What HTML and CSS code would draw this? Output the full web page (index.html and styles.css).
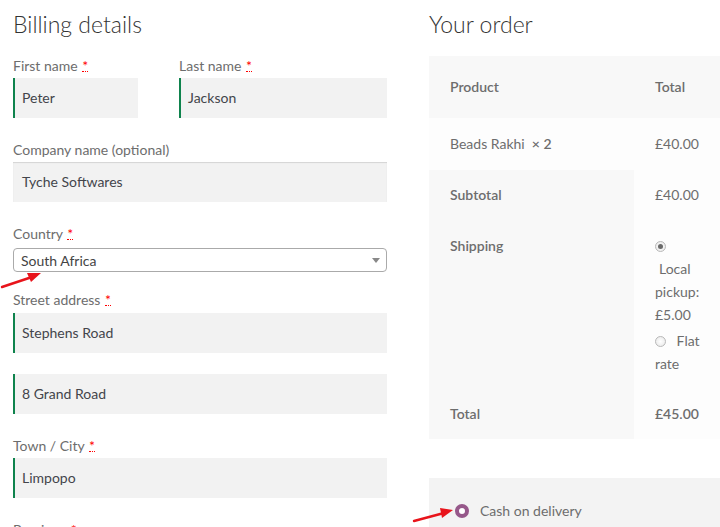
FILE: index.html
```html
<!DOCTYPE html>
<html lang="en">
<head>
    <meta charset="UTF-8">
    <meta name="viewport" content="width=device-width, initial-scale=1.0">
    <title>Checkout</title>
    <link rel="stylesheet" href="styles.css">
</head>
<body>

    <div class="checkout">

        <!-- Billing details -->
        <div class="billing">
            <h3>Billing details</h3>

            <div class="row-split">
                <div class="field field-first">
                    <label>First name <abbr>*</abbr></label>
                    <div class="input valid">Peter</div>
                </div>
                <div class="field field-last">
                    <label>Last name <abbr>*</abbr></label>
                    <div class="input valid">Jackson</div>
                </div>
            </div>

            <div class="field">
                <label>Company name (optional)</label>
                <div class="input">Tyche Softwares</div>
            </div>

            <div class="field field-select">
                <label>Country <abbr>*</abbr></label>
                <div class="select">
                    <span>South Africa</span>
                    <span class="caret"></span>
                </div>
            </div>

            <div class="field field-street">
                <label>Street address <abbr>*</abbr></label>
                <div class="input valid">Stephens Road</div>
                <div class="input valid second">8 Grand Road</div>
            </div>

            <div class="field">
                <label>Town / City <abbr>*</abbr></label>
                <div class="input valid">Limpopo</div>
            </div>

            <div class="field">
                <label>Province <abbr>*</abbr></label>
            </div>
        </div>

        <!-- Your order -->
        <div class="order">
            <h3>Your order</h3>

            <table class="order-table">
                <thead>
                    <tr>
                        <th class="col-name">Product</th>
                        <th class="col-total">Total</th>
                    </tr>
                </thead>
                <tbody>
                    <tr>
                        <td class="col-name">Beads Rakhi&nbsp; <strong class="qty">&times;&nbsp;2</strong></td>
                        <td class="col-total">&pound;40.00</td>
                    </tr>
                </tbody>
                <tfoot>
                    <tr class="subtotal">
                        <th>Subtotal</th>
                        <td>&pound;40.00</td>
                    </tr>
                    <tr class="shipping">
                        <th>Shipping</th>
                        <td>
                            <ul class="methods">
                                <li><span class="radio checked"></span> <span class="method">Local pickup: &pound;5.00</span></li>
                                <li><span class="radio"></span> <span class="method">Flat rate</span></li>
                            </ul>
                        </td>
                    </tr>
                    <tr class="grand-total">
                        <th>Total</th>
                        <td><strong>&pound;45.00</strong></td>
                    </tr>
                </tfoot>
            </table>

            <div class="payment">
                <div class="pay-method">
                    <span class="pay-radio"></span>
                    <span>Cash on delivery</span>
                </div>
            </div>
        </div>
    </div>

    <!-- annotation arrows -->
    <svg class="arrow arrow-country" width="44" height="20" viewBox="0 0 44 20">
        <line x1="2" y1="17" x2="32" y2="7" stroke="#e8141b" stroke-width="2.4" stroke-linecap="round"/>
        <polygon points="41,3 27,3 31,12" fill="#e8141b"/>
    </svg>
    <svg class="arrow arrow-payment" width="44" height="20" viewBox="0 0 44 20">
        <line x1="2" y1="16" x2="32" y2="8" stroke="#e8141b" stroke-width="2.4" stroke-linecap="round"/>
        <polygon points="41,5 28,3 30,13" fill="#e8141b"/>
    </svg>

</body>
</html>
```

FILE: styles.css
```css
html {
    overflow: hidden;
}

body {
    margin: 0;
    font-family: Lato, "Open Sans", sans-serif;
    font-size: 14px;
    color: #6d6d6d;
    background-color: #fff;
    position: relative;
    width: 760px;
}

.checkout {
    display: flex;
    gap: 42px;
    padding: 0 13px;
}

h3 {
    margin: 0;
    padding-top: 11px;
    height: 56px;
    box-sizing: border-box;
    font-size: 23px;
    line-height: 26px;
    font-weight: 300;
    color: #333;
}

/* Billing */

.billing {
    width: 374px;
    flex-shrink: 0;
}

.row-split {
    display: flex;
    justify-content: space-between;
}

.field {
    margin-bottom: 22px;
}

.field-first {
    width: 125px;
}

.field-last {
    width: 208px;
}

.field label {
    display: block;
    line-height: 20px;
    margin-bottom: 2px;
    color: #6d6d6d;
}

abbr {
    color: #f00;
    text-decoration: none;
    border-bottom: 1px dotted #f00;
    line-height: 10px;
    display: inline-block;
    margin-left: 1px;
}

.input {
    height: 40px;
    line-height: 40px;
    padding-left: 9px;
    background-color: #f2f2f2;
    color: #43454b;
    box-shadow: inset 0 1px 1px rgba(0, 0, 0, 0.125);
    box-sizing: border-box;
}

.input.valid {
    border-left: 2px solid #0f834d;
    padding-left: 7px;
    box-shadow: none;
}

.input.second {
    margin-top: 21px;
}

.field-street label {
    margin-bottom: 3px;
}

.field-select {
    margin-bottom: 18px;
}

.field-select label {
    margin-bottom: 4px;
}

.select {
    height: 24px;
    border: 1px solid #aaa;
    border-radius: 4px;
    box-sizing: border-box;
    display: flex;
    align-items: center;
    justify-content: space-between;
    padding: 0 6px 0 7px;
    color: #444;
}

.caret {
    width: 0;
    height: 0;
    border-left: 4px solid transparent;
    border-right: 4px solid transparent;
    border-top: 5px solid #888;
}

/* Order */

.order {
    width: 320px;
    flex-shrink: 0;
}

.order-table {
    border-collapse: collapse;
    width: 320px;
    table-layout: fixed;
}

.order-table th,
.order-table td {
    text-align: left;
    padding: 0 21px;
    line-height: 20px;
    vertical-align: top;
}

.order-table th {
    font-weight: 600;
}

.order-table thead th {
    background-color: #f8f8f8;
    padding-top: 21px;
    padding-bottom: 21px;
}

.col-name {
    width: 163px;
}

.order-table tbody td {
    background-color: #fdfdfd;
    padding-top: 16px;
    padding-bottom: 16px;
}

.qty {
    font-weight: 600;
}

.order-table tfoot th {
    background-color: #f8f8f8;
}

.order-table tfoot td {
    background-color: #fdfdfd;
}

.subtotal th,
.subtotal td {
    padding-top: 15px;
    padding-bottom: 16px;
}

.shipping th,
.shipping td {
    padding-top: 15px;
    padding-bottom: 11px;
}

.shipping td {
    padding-top: 13px;
}

.methods {
    list-style: none;
    margin: 0;
    padding: 0;
    width: 50px;
    line-height: 23px;
}

.methods li {
    margin-bottom: 3px;
}

.method {
    margin-left: 4px;
}

.radio {
    display: inline-block;
    width: 11px;
    height: 11px;
    border: 1px solid #b9b9b9;
    border-radius: 50%;
    background: radial-gradient(circle, #fff 0, #e6e6e6 100%);
    box-sizing: border-box;
    vertical-align: -1px;
    position: relative;
    margin-right: 3px;
}

.radio.checked::after {
    content: "";
    position: absolute;
    left: 2px;
    top: 2px;
    width: 5px;
    height: 5px;
    border-radius: 50%;
    background-color: #6a6a6a;
}

.grand-total th,
.grand-total td {
    padding-top: 15px;
    padding-bottom: 15px;
}

.grand-total strong {
    font-weight: 600;
}

.payment {
    margin-top: 39px;
    background-color: #f3f3f3;
    height: 60px;
    padding: 23px 0 0 26px;
    box-sizing: border-box;
}

.pay-method {
    display: flex;
    align-items: center;
    gap: 11px;
    line-height: 20px;
}

.pay-radio {
    width: 14px;
    height: 14px;
    border-radius: 50%;
    border: 4px solid #96588a;
    background-color: #fff;
    box-sizing: border-box;
}

/* Annotations */

.arrow {
    position: absolute;
}

.arrow-country {
    left: 0;
    top: 270px;
}

.arrow-payment {
    left: 412px;
    top: 505px;
}
```
